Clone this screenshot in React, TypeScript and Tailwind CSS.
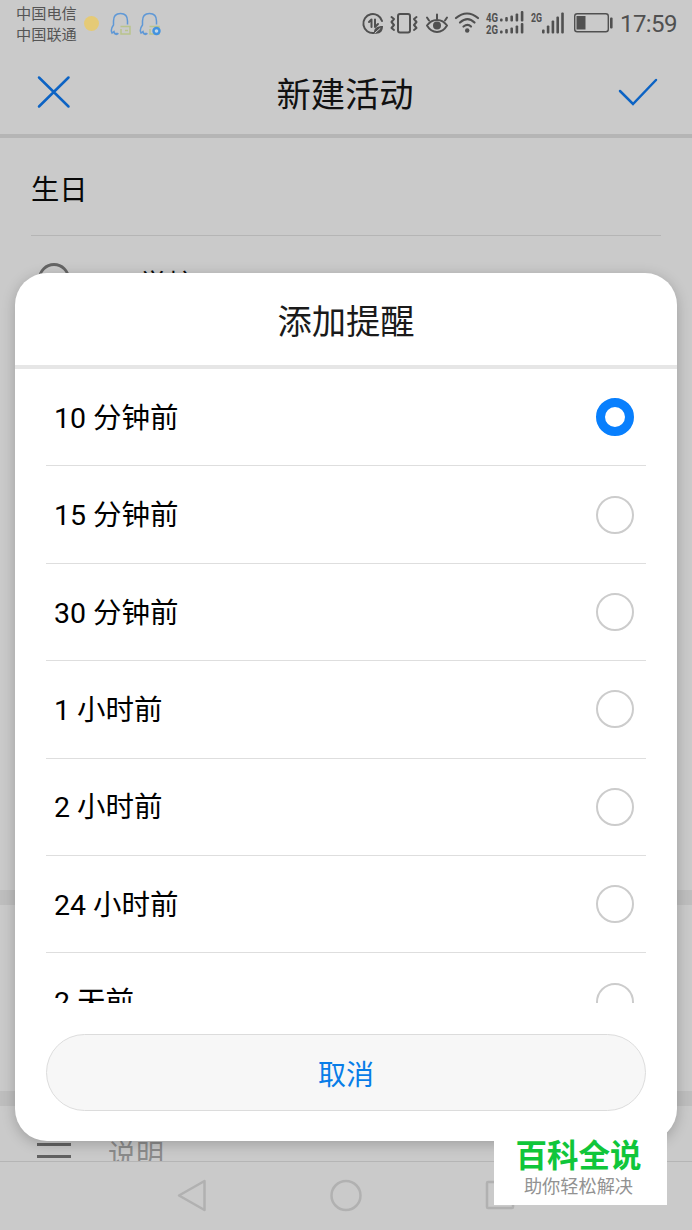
const reminders = ['10 分钟前', '15 分钟前', '30 分钟前', '1 小时前', '2 小时前', '24 小时前', '2 天前']

const Penguin = ({ dot = false }) => (
  <svg className="h-[24px] w-[24px]" viewBox="0 0 24 24" fill="none" strokeWidth="1.5">
    <path d="M10.500 14.500H20V22H11V17" stroke="#b9c48c" />
    <path d="M15 18.500H18" stroke="#b9c48c" />
    <path d="M8 21.500H4.500L4 19.500L2 21C.5 18 1.500 15.500 3.500 13V9C3.500 4 6.500 1.500 10.500 1.500S17.500 4 17.500 9V12.500M4.500 21.500C6 23 8 22.500 8 21" stroke="#5f98d6" />
    {dot && <circle cx="17.500" cy="19" r="3" stroke="#4292e0" strokeWidth="2.400" fill="#c4d8e6" />}
  </svg>
)

const Bars = ({ x, y, h, w = 2.6, step = 5.2 }) => (
  <>
    {h.map((n, i) => <rect key={i} x={x + i * step} y={y - n} width={w} height={n} rx="1" />)}
  </>
)

const StatusBar = () => (
  <div className="flex h-[48px] shrink-0 items-start text-[#505050]">
    <div className="w-[62px] ml-4 pt-[4px] text-[15.2px] leading-[21px] text-[#555]">
      <div>中国电信</div>
      <div>中国联通</div>
    </div>
    <span className="mt-[16px] ml-[6px] h-[15px] w-[15px] rounded-full bg-[#e5ca76]" />
    <div className="mt-[12px] ml-[11px] flex gap-[5px]">
      <Penguin />
      <Penguin dot />
    </div>
    <svg className="ml-auto h-[48px] w-[256px] shrink-0" viewBox="360 0 256 48" fill="none" stroke="currentColor" strokeWidth="2" strokeLinecap="round" strokeLinejoin="round">
      <path d="M382 21A9.500 9.500 0 1 0 374 33M369 22L371.500 19.500V27M375 19.500V27L378 24" />
      <path d="M374 33.500C373.500 28 377 26 383 26C383 31.500 380 34.500 374 33.500Z" fill="currentColor" stroke="none" />
      <path d="M375 33L380 28.500" stroke="#cacaca" strokeWidth="1" />
      <rect x="398" y="14" width="12" height="18.500" rx="2" />
      <path d="M391.500 17L394 19L391.500 22L394 25L391.500 28L394 30M416.500 17L414 19L416.500 22L414 25L416.500 28L414 30" />
      <path d="M427 25.500C432 18 442 18 447 25.500C442 34 432 34 427 25.500ZM437 19V14.500M429 20.500L427 17.500M445 20.500L447 17.500" />
      <circle cx="437" cy="25.500" r="4" fill="currentColor" stroke="none" />
      <path d="M456 18C463 12 471 12 478 18M460 22.500C465 18 470 18 474.500 22.500M463.500 26.500C466 24.500 469 24.500 471 26.500" strokeWidth="2.200" />
      <circle cx="467.200" cy="30.500" r="2.200" fill="currentColor" stroke="none" />
      <g fill="currentColor" stroke="none" fontFamily="Roboto, sans-serif" fontSize="12.500" fontWeight="700">
        <text x="486" y="21.500" textLength="12" lengthAdjust="spacingAndGlyphs">4G</text>
        <text x="486" y="33.500" textLength="12" lengthAdjust="spacingAndGlyphs">2G</text>
        <Bars x={500} y={21.5} h={[3, 4.5, 6, 8, 10.5]} />
        <Bars x={500} y={33.5} h={[3, 4.5, 6, 8, 10.5]} />
        <text x="531" y="21.500" textLength="11" lengthAdjust="spacingAndGlyphs">2G</text>
        <Bars x={542} y={33.5} h={[4, 8, 13, 17, 21]} step={4.8} />
        <rect x="576.500" y="16" width="9" height="13.500" />
        <rect x="610" y="17.500" width="2.600" height="11" rx="1" />
      </g>
      <rect x="574.700" y="13.700" width="33.600" height="18" rx="2.500" strokeWidth="1.400" />
    </svg>
    <span className="ml-[4px] mr-[15px] w-[57px] pt-[8px] text-[24px] leading-[32px] tracking-[-0.6px] whitespace-nowrap">17:59</span>
  </div>
)

const Page = () => (
  <div className="flex h-full flex-col">
    <StatusBar />
    <header className="flex h-[90px] shrink-0 items-center justify-between border-b-4 border-[#b5b5b5] pt-[2px] pr-[34px] pl-[37px] text-[34.3px] text-[#111]">
      <svg className="h-[34px] w-[34px]" viewBox="0 0 34 34" fill="none" stroke="#0c63c4" strokeWidth="2.500" strokeLinecap="round">
        <path d="M2 2.500L31.500 31.500M31.500 2.500L2 31.500" />
      </svg>
      <h1 className="pt-[7px] pl-px">新建活动</h1>
      <svg className="h-[30px] w-[40px]" viewBox="0 0 40 30" fill="none" stroke="#0c63c4" strokeWidth="2.500" strokeLinecap="round">
        <path d="M2 14L15 27L38 3" />
      </svg>
    </header>
    <div className="mx-[31px] flex h-[98px] shrink-0 items-center border-b border-[#b5b5b5] pt-[9px] text-[28.3px] text-[#080808]">生日</div>
    <div className="flex h-[654px] shrink-0 items-start pt-[26px] pl-[38px] text-[28px] text-[#080808]">
      <svg className="h-[38px] w-[32px]" viewBox="0 0 32 38" fill="none" stroke="#656565" strokeWidth="2.800">
        <path d="M16 36C9 28 1.500 22 1.500 17A14.500 14.500 0 0 1 30.500 17C30.500 22 23 28 16 36Z" />
      </svg>
      <span className="ml-[69px] pt-[7px] leading-[34px]">学校</span>
    </div>
    <div className="h-[15px] shrink-0 bg-[#bebebe]" />
    <div className="h-[186px] shrink-0" />
    <div className="h-[15px] shrink-0 bg-[#bebebe]" />
    <div className="flex h-[55px] shrink-0 items-start overflow-hidden pl-[37px]">
      <div className="mt-[25px] flex w-[34px] flex-col gap-[9px]">
        <span className="h-[3px] bg-[#626262]" />
        <span className="h-[3px] bg-[#626262]" />
        <span className="h-[3px] bg-[#626262]" />
      </div>
      <span className="mt-[32px] ml-[37px] text-[28px] leading-[36px] text-[#8b8b8b]">说明</span>
    </div>
    <nav className="h-[69px] shrink-0 border-t border-[#b5b5b5]">
      <svg className="h-[68px] w-full" viewBox="0 0 692 68" fill="none" stroke="#b1b1b1" strokeWidth="2.500" strokeLinejoin="round">
        <path d="M179 33.500L204.500 19V48Z" />
        <circle cx="346" cy="33.500" r="14.500" />
        <rect x="487" y="20" width="26" height="26" rx="1" />
      </svg>
    </nav>
  </div>
)

const ReminderDialog = () => (
  <div className="absolute top-[273px] left-[15px] flex h-[868px] w-[662px] flex-col overflow-hidden rounded-[32px] bg-white shadow-[0_3px_14px_rgba(0,0,0,0.22)]">
    <h2 className="flex h-[96px] shrink-0 items-center justify-center border-b-4 border-[#e6e6e6] pt-[7px] text-[34.3px] text-[#1a1a1a]">添加提醒</h2>
    <ul className="h-[634px] shrink-0 overflow-hidden px-[31px]">
      {reminders.map((label, i) => (
        <li key={label} className="flex h-[97.4px] items-center justify-between border-b border-[#dedede] pr-[12px] pl-[8px] text-[28.5px] text-black">
          <span className="pt-[4px]">{label}</span>
          {
            i === 0 ?
              <span className="h-[38px] w-[38px] rounded-full border-[9.5px] border-[#087ffd] bg-white" />
              :
              <span className="h-[38px] w-[38px] rounded-full border-2 border-[#ccc]" />
          }
        </li>
      ))}
    </ul>
    <button className="mx-[31px] mt-[31px] h-[77px] rounded-full border border-[#dcdcdc] bg-[#f7f7f7] pt-[6px] text-[28px] text-[#087de8]">取消</button>
  </div>
)

export default () => (
  <div className="relative h-[1230px] w-[692px] overflow-hidden bg-[#cacaca] font-[Roboto,'Noto_Sans_CJK_SC',sans-serif]">
    <Page />
    <ReminderDialog />
    <div className="absolute top-[1132px] left-[494px] flex h-[73px] w-[173px] flex-col items-center bg-white pr-[4px]">
      <strong className="mt-[6px] text-[31.5px] leading-[38px] font-bold text-[#10c63a]">百科全说</strong>
      <span className="text-[18.2px] leading-[22px] text-[#929292]">助你轻松解决</span>
    </div>
  </div>
)
